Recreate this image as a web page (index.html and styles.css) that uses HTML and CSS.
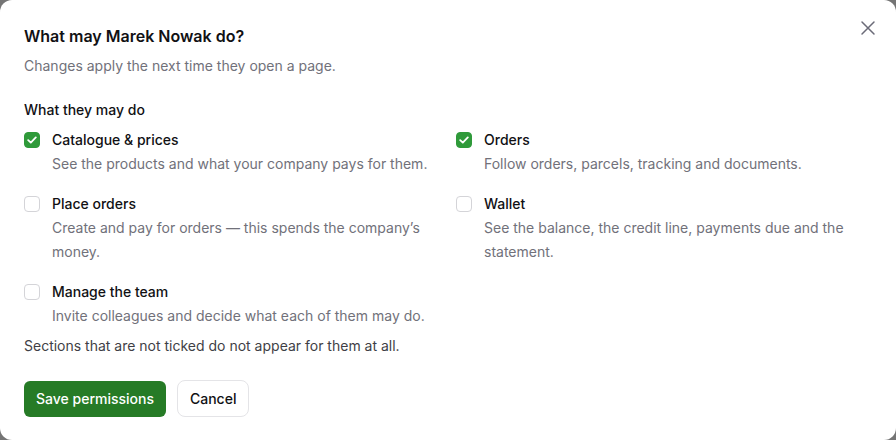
FILE: index.html
```html
<!DOCTYPE html>
<html lang="en">
<head>
<meta charset="utf-8">
<title>Permissions</title>
<link rel="stylesheet" href="styles.css">
</head>
<body>
<div class="dialog">
  <button class="close" aria-label="Close">
    <svg width="16" height="16" viewBox="0 0 16 16"><path d="M2 2L14 14M14 2L2 14" stroke="#6b6b78" stroke-width="1.5" stroke-linecap="round"/></svg>
  </button>
  <h1 class="title">What may Marek Nowak do?</h1>
  <p class="subtitle">Changes apply the next time they open a page.</p>
  <h2 class="section">What they may do</h2>
  <div class="grid">
    <label class="opt">
      <span class="box checked"><svg width="10" height="8" viewBox="0 0 10 8"><path d="M1.2 4.2L3.8 6.6L8.8 1.4" fill="none" stroke="#fff" stroke-width="1.8" stroke-linecap="round" stroke-linejoin="round"/></svg></span>
      <span class="txt"><span class="name">Catalogue &amp; prices</span><span class="desc">See the products and what your company pays for them.</span></span>
    </label>
    <label class="opt">
      <span class="box checked"><svg width="10" height="8" viewBox="0 0 10 8"><path d="M1.2 4.2L3.8 6.6L8.8 1.4" fill="none" stroke="#fff" stroke-width="1.8" stroke-linecap="round" stroke-linejoin="round"/></svg></span>
      <span class="txt"><span class="name">Orders</span><span class="desc">Follow orders, parcels, tracking and documents.</span></span>
    </label>
    <label class="opt">
      <span class="box"></span>
      <span class="txt"><span class="name">Place orders</span><span class="desc">Create and pay for orders — this spends the company’s money.</span></span>
    </label>
    <label class="opt">
      <span class="box"></span>
      <span class="txt"><span class="name">Wallet</span><span class="desc">See the balance, the credit line, payments due and the statement.</span></span>
    </label>
    <label class="opt">
      <span class="box"></span>
      <span class="txt"><span class="name">Manage the team</span><span class="desc">Invite colleagues and decide what each of them may do.</span></span>
    </label>
  </div>
  <p class="note">Sections that are not ticked do not appear for them at all.</p>
  <div class="actions">
    <button class="btn primary">Save permissions</button>
    <button class="btn secondary">Cancel</button>
  </div>
</div>
</body>
</html>
```

FILE: styles.css
```css
* { box-sizing: border-box; }
html, body { margin: 0; padding: 0; }
body {
  background: #757575;
  font-family: Inter, "Noto Sans", sans-serif;
  color: #111114;
  width: 896px;
  height: 440px;
  overflow: hidden;
}
.dialog {
  position: relative;
  width: 896px;
  height: 440px;
  background: #fff;
  border-radius: 12px;
  padding: 24px;
}
.close {
  position: absolute;
  top: 20px;
  right: 20px;
  width: 16px;
  height: 16px;
  padding: 0;
  border: 0;
  background: none;
  display: flex;
}
.title {
  margin: 0;
  font-size: 16px;
  line-height: 24px;
  font-weight: 600;
}
.subtitle {
  margin: 8px 0 0;
  font-size: 14px;
  line-height: 20px;
  color: #71717a;
}
.section {
  margin: 24px 0 0;
  font-size: 14px;
  line-height: 20px;
  font-weight: 500;
}
.grid {
  margin-top: 8px;
  display: grid;
  grid-template-columns: 416px 416px;
  column-gap: 16px;
  row-gap: 16px;
}
.opt {
  display: flex;
  gap: 12px;
  align-items: flex-start;
}
.box {
  flex: none;
  width: 16px;
  height: 16px;
  margin-top: 4px;
  border: 1px solid #d4d4d8;
  border-radius: 4px;
  background: #fff;
  display: flex;
  align-items: center;
  justify-content: center;
}
.box.checked {
  background: #2f9a3a;
  border-color: #2f9a3a;
}
.txt { display: flex; flex-direction: column; }
.name {
  font-size: 14px;
  line-height: 24px;
  font-weight: 500;
}
.desc {
  font-size: 14px;
  line-height: 24px;
  color: #71717a;
}
.note {
  margin: 8px 0 0;
  font-size: 14px;
  line-height: 20px;
  color: #3f3f46;
}
.actions {
  margin-top: 24px;
  display: flex;
  gap: 11px;
  align-items: center;
}
.btn {
  font-family: inherit;
  font-size: 14px;
  font-weight: 500;
  height: 36px;
  border-radius: 6px;
  padding: 0 12px;
  cursor: pointer;
}
.primary {
  background: #267b26;
  color: #fff;
  border: 0;
}
.secondary {
  background: #fff;
  color: #111114;
  border: 1px solid #e4e4e7;
  border-radius: 8px;
  height: 37px;
  padding: 0 12px;
}
```
